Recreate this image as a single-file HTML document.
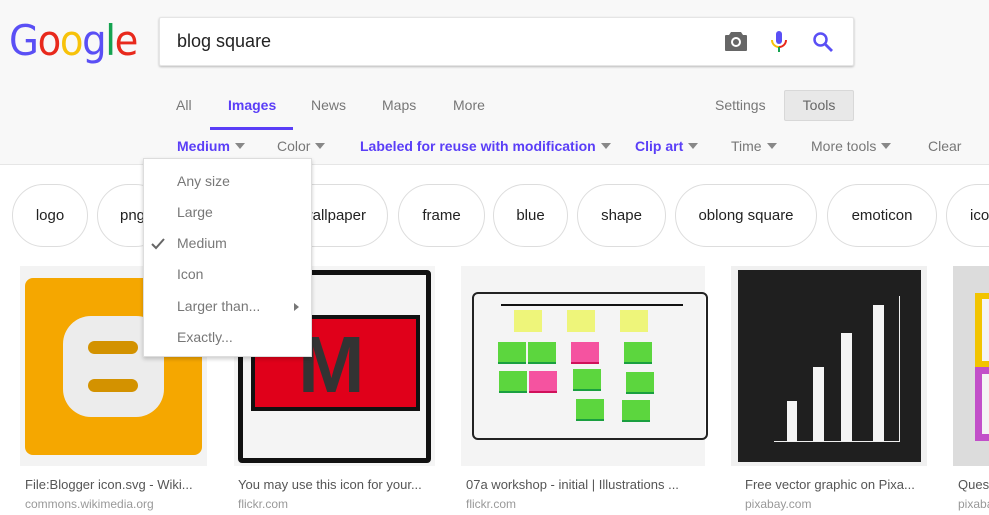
<!DOCTYPE html>
<html><head><meta charset="utf-8"><style>
*{margin:0;padding:0;box-sizing:border-box}
body{width:989px;height:515px;overflow:hidden;background:#fff;font-family:"Liberation Sans",Arial,sans-serif;position:relative}
.a{position:absolute}
#hdr{left:0;top:0;width:989px;height:165px;background:#f8f8f8;border-bottom:1px solid #e6e6e6}
.logo{left:9px;top:16px;font-size:42px;letter-spacing:-1.5px;font-family:"DejaVu Sans","Liberation Sans",sans-serif;transform:scaleX(0.92);transform-origin:left}
#sb{left:159px;top:17px;width:695px;height:49px;background:#fff;border-radius:2px;box-shadow:0 1px 2px rgba(0,0,0,.25);border:1px solid #e5e5e5}
.nav{top:97px;font-size:14px;color:#777}
.flt{top:138px;font-size:14px;color:#777}
.bl{color:#5a3ef7;font-weight:bold}
.tri{display:inline-block;width:0;height:0;border-left:5px solid transparent;border-right:5px solid transparent;border-top:6px solid #888;margin-left:5px;vertical-align:2px}
.chip{top:184px;height:63px;border:1px solid #ddd;border-radius:32px;background:#fff;font-size:15px;color:#222;text-align:center;line-height:61px}
.cap{top:477px;font-size:13px;color:#555;white-space:nowrap}
.src{top:497px;font-size:12px;color:#999}
#dd{left:143px;top:158px;width:169px;height:199px;background:#fff;border:1px solid #ddd;box-shadow:0 2px 4px rgba(0,0,0,.2)}
#dd div{position:absolute;left:33px;font-size:14px;color:#777}
.sq{position:absolute;width:28px;height:22px;background:#5cd63e;border-bottom:2px solid #1a9f40}
</style></head><body>
<div id="hdr" class="a"></div>
<div class="a logo"><span style="color:#5a4ff5">G</span><span style="color:#e8291c">o</span><span style="color:#f7c20a">o</span><span style="color:#5a4ff5">g</span><span style="color:#15a350">l</span><span style="color:#e8291c">e</span></div>
<div id="sb" class="a"></div>
<div class="a" style="left:177px;top:31px;font-size:18px;color:#222">blog square</div>
<svg class="a" style="left:724px;top:30px" width="24" height="22" viewBox="0 0 24 22"><path d="M7 2h10l2 3h3a1 1 0 0 1 1 1v14a1 1 0 0 1-1 1H2a1 1 0 0 1-1-1V6a1 1 0 0 1 1-1h3z" fill="#666"/><circle cx="12" cy="12" r="5" fill="#fff"/><circle cx="12" cy="12" r="3" fill="#666"/></svg>
<svg class="a" style="left:770px;top:30px" width="18" height="24" viewBox="0 0 18 24"><rect x="6" y="1" width="6" height="13" rx="3" fill="#5a4ff5"/><path d="M2 10a7 7 0 0 0 7 7" stroke="#f7c20a" stroke-width="2" fill="none"/><path d="M16 10a7 7 0 0 1-7 7" stroke="#e8291c" stroke-width="2" fill="none"/><path d="M9 17v5" stroke="#15a350" stroke-width="2"/></svg>
<svg class="a" style="left:812px;top:31px" width="22" height="22" viewBox="0 0 22 22"><circle cx="8.5" cy="8.5" r="6" stroke="#5a4ff5" stroke-width="2.5" fill="none"/><path d="M13 13l7 7" stroke="#5a4ff5" stroke-width="2.8"/></svg>
<div class="a nav" style="left:176px">All</div>
<div class="a nav bl" style="left:228px">Images</div>
<div class="a" style="left:210px;top:127px;width:83px;height:3px;background:#5a3ef7"></div>
<div class="a nav" style="left:311px">News</div>
<div class="a nav" style="left:382px">Maps</div>
<div class="a nav" style="left:453px">More</div>
<div class="a nav" style="left:715px">Settings</div>
<div class="a" style="left:784px;top:90px;width:70px;height:31px;background:#e8e8e8;border:1px solid #d8d8d8;border-radius:2px;font-size:14px;color:#666;text-align:center;line-height:29px">Tools</div>
<div class="a flt bl" style="left:177px">Medium<span class="tri"></span></div>
<div class="a flt" style="left:277px">Color<span class="tri"></span></div>
<div class="a flt bl" style="left:360px">Labeled for reuse with modification<span class="tri"></span></div>
<div class="a flt bl" style="left:635px">Clip art<span class="tri"></span></div>
<div class="a flt" style="left:731px">Time<span class="tri"></span></div>
<div class="a flt" style="left:811px">More tools<span class="tri"></span></div>
<div class="a flt" style="left:928px">Clear</div>

<div class="a chip" style="left:12px;width:76px">logo</div>
<div class="a chip" style="left:97px;width:70px;text-align:left;padding-left:22px">png</div>
<div class="a chip" style="left:230px;width:158px;text-align:right;padding-right:21px">wallpaper</div>
<div class="a chip" style="left:398px;width:87px">frame</div>
<div class="a chip" style="left:493px;width:75px">blue</div>
<div class="a chip" style="left:577px;width:89px">shape</div>
<div class="a chip" style="left:675px;width:142px">oblong square</div>
<div class="a chip" style="left:827px;width:110px">emoticon</div>
<div class="a chip" style="left:946px;width:80px;text-align:left;padding-left:23px">icon</div>

<div class="a" style="left:20px;top:266px;width:187px;height:200px;background:#f3f3f3"></div>
<div class="a" style="left:25px;top:278px;width:177px;height:177px;background:#f5a700;border-radius:8px;overflow:hidden"></div>
<div class="a" style="left:63px;top:316px;width:101px;height:101px;background:#ececec;border-radius:28px"></div>
<div class="a" style="left:88px;top:341px;width:50px;height:13px;background:#d39200;border-radius:7px"></div>
<div class="a" style="left:88px;top:379px;width:50px;height:13px;background:#d39200;border-radius:7px"></div>
<div class="a" style="left:234px;top:266px;width:201px;height:200px;background:#f5f5f5"></div>
<div class="a" style="left:238px;top:270px;width:193px;height:193px;border:5px solid #111;border-radius:4px;background:#f4f4f4"></div>
<div class="a" style="left:251px;top:315px;width:169px;height:96px;background:#e0001a;border:4px solid #111"></div>
<div class="a" style="left:298px;top:330px;width:80px;height:70px;font-size:80px;font-weight:bold;color:#333;line-height:70px">M</div>
<div class="a" style="left:461px;top:266px;width:244px;height:200px;background:#f4f4f4"></div>
<div class="a" style="left:472px;top:292px;width:236px;height:148px;border:2px solid #222;border-radius:6px"></div>
<div class="a" style="left:501px;top:304px;width:182px;height:2px;background:#111"></div>
<div class="a" style="left:514px;top:310px;width:28px;height:22px;background:#eef57a"></div>
<div class="a" style="left:567px;top:310px;width:28px;height:22px;background:#eef57a"></div>
<div class="a" style="left:620px;top:310px;width:28px;height:22px;background:#eef57a"></div>
<div class="sq" style="left:498px;top:342px"></div><div class="sq" style="left:528px;top:342px"></div><div class="sq" style="left:571px;top:342px;background:#f553a0;border-color:#d0105a"></div><div class="sq" style="left:624px;top:342px"></div>
<div class="sq" style="left:499px;top:371px"></div><div class="sq" style="left:529px;top:371px;background:#f553a0;border-color:#d0105a"></div><div class="sq" style="left:573px;top:369px"></div><div class="sq" style="left:626px;top:372px"></div>
<div class="sq" style="left:576px;top:399px"></div><div class="sq" style="left:622px;top:400px"></div>
<div class="a" style="left:731px;top:266px;width:196px;height:200px;background:#f0f0f0"></div>
<div class="a" style="left:738px;top:270px;width:183px;height:192px;background:#1f1f1f"></div>
<div class="a" style="left:774px;top:441px;width:126px;height:1px;background:#eee"></div>
<div class="a" style="left:899px;top:296px;width:1px;height:146px;background:#eee"></div>
<div class="a" style="left:787px;top:401px;width:10px;height:40px;background:#f4f4f4"></div>
<div class="a" style="left:813px;top:367px;width:11px;height:74px;background:#f4f4f4"></div>
<div class="a" style="left:841px;top:333px;width:11px;height:108px;background:#f4f4f4"></div>
<div class="a" style="left:873px;top:305px;width:11px;height:136px;background:#f4f4f4"></div>
<div class="a" style="left:953px;top:266px;width:40px;height:200px;background:#dcdcdc"></div>
<div class="a" style="left:975px;top:293px;width:20px;height:74px;background:#f2c400"></div>
<div class="a" style="left:975px;top:367px;width:20px;height:74px;background:#c24fc9"></div>
<div class="a" style="left:982px;top:299px;width:10px;height:62px;background:#f4f4f4"></div>
<div class="a" style="left:982px;top:374px;width:10px;height:60px;background:#f4f4f4"></div>

<div class="a cap" style="left:25px">File:Blogger icon.svg - Wiki...</div>
<div class="a src" style="left:25px">commons.wikimedia.org</div>
<div class="a cap" style="left:238px">You may use this icon for your...</div>
<div class="a src" style="left:238px">flickr.com</div>
<div class="a cap" style="left:466px">07a workshop - initial | Illustrations ...</div>
<div class="a src" style="left:466px">flickr.com</div>
<div class="a cap" style="left:745px">Free vector graphic on Pixa...</div>
<div class="a src" style="left:745px">pixabay.com</div>
<div class="a cap" style="left:958px">Questions</div>
<div class="a src" style="left:958px">pixabay.com</div>

<div id="dd" class="a">
<div style="top:14px">Any size</div>
<div style="top:45px">Large</div>
<div style="top:76px">Medium</div>
<div style="top:107px">Icon</div>
<div style="top:139px">Larger than...</div>
<div style="top:170px">Exactly...</div>
<svg style="position:absolute;left:7px;top:79px" width="14" height="12" viewBox="0 0 14 12"><path d="M1 6l4 4 8-9" stroke="#666" stroke-width="2" fill="none"/></svg>
<span style="position:absolute;left:150px;top:144px;width:0;height:0;border-top:4px solid transparent;border-bottom:4px solid transparent;border-left:5px solid #777"></span>
</div>
</body></html>
